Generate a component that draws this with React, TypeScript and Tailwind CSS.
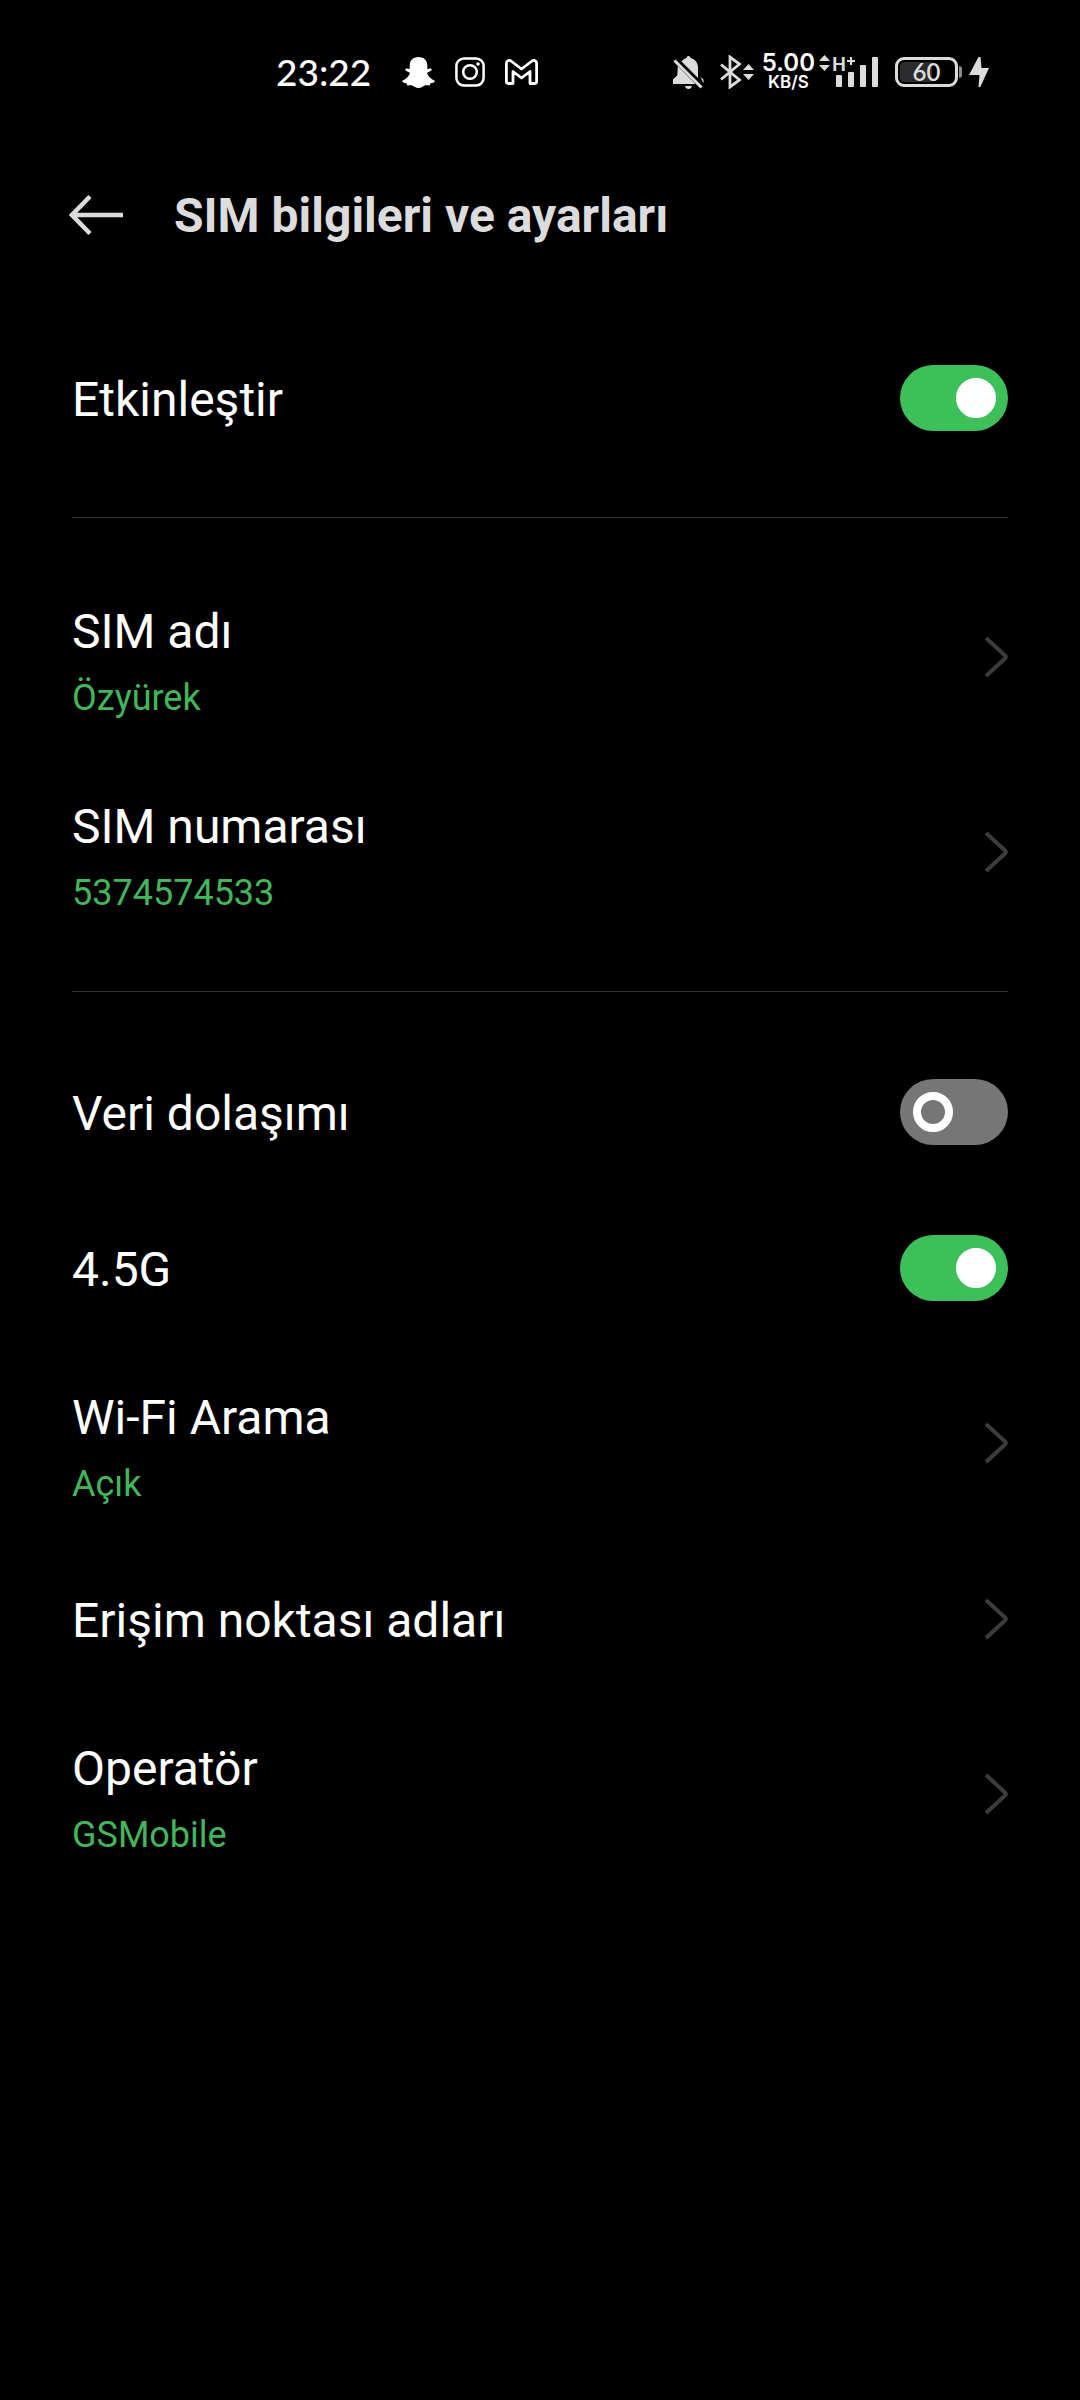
import { useState } from "react";

interface ToggleRowProps {
  label: string;
  defaultChecked?: boolean;
}

interface LinkRowProps {
  label: string;
  value?: string;
}

function ToggleRow({ label, defaultChecked = false }: ToggleRowProps) {
  const [checked, setChecked] = useState(defaultChecked);

  return (
    <label className="flex h-[156px] cursor-pointer items-center justify-between">
      <span className="pt-1 text-[48px] leading-[56px]">{label}</span>
      <span className="relative h-[66px] w-[108px] shrink-0">
        <input
          type="checkbox"
          role="switch"
          checked={checked}
          onChange={(e) => setChecked(e.target.checked)}
          className="peer block h-full w-full cursor-pointer appearance-none rounded-full bg-[#767676] checked:bg-[#3dc059]"
        />
        {/* Knob: hollow when off, solid when on */}
        <span className="pointer-events-none absolute top-[13px] left-[13px] size-10 rounded-full border-8 border-white peer-checked:left-[56px] peer-checked:bg-white" />
      </span>
    </label>
  );
}

function LinkRow({ label, value }: LinkRowProps) {
  return (
    <button
      type="button"
      className={`flex w-full cursor-pointer items-center justify-between text-left ${value ? "h-[195px] pb-px" : "h-[156px]"}`}
    >
      <span className={`flex flex-col gap-[17px] ${value ? "pt-2" : "pt-1"}`}>
        <span className="text-[48px] leading-[56px]">{label}</span>
        {value && <span className="text-[36px] leading-[42px] text-[#41b65c]">{value}</span>}
      </span>
      <svg className="h-[42px] w-6 shrink-0" viewBox="0 0 24 42" fill="none" stroke="#3b3b3b" strokeWidth="4">
        <path d="M2 2 21 19.5q1.5 1.5 0 3L2 40" />
      </svg>
    </button>
  );
}

function Divider() {
  return <hr className="mt-[41px] mb-[42px] h-px border-0 bg-[#333333]" />;
}

function DataArrows() {
  return (
    <svg className="h-4 w-[11px]" viewBox="0 0 11 16" fill="#dcdcdc">
      <path d="M5.5 0 11 6H0zM5.5 16 11 10H0z" />
    </svg>
  );
}

function StatusBar() {
  return (
    <div className="flex h-[144px] items-center pr-[91px] pl-[276px]">
      <span className="font-[Lato] text-[37px] leading-[44px] font-medium">23:22</span>
      <div className="ml-[31px] flex items-center gap-5">
        <svg className="h-[31px] w-[33px]" viewBox="0 0 33 31" fill="currentColor">
          <path d="M16.5 0C11 0 7.7 3.5 7.7 8.5V12c-1.2.2-2.7-.9-3.9-.3-1.3.9-.5 2.1 3.2 3.6.9.4 1 1 .6 1.8-1.4 2.9-3.6 5.3-6.8 6.300-1.600.9 0 2.100 3.700 2.900l.8 2.300c4.200-.9 5.200-.2 7.200 1.200 2.600 1.600 5.400 1.600 8 0 2-1.400 3-2.100 7.200-1.200l.8-2.300c3.700-.8 5.300-2 3.700-2.900-3.200-1-5.400-3.400-6.800-6.300-.4-.8-.3-1.400.6-1.800 3.700-1.500 4.500-2.700 3.200-3.600-1.200-.6-2.700.5-3.900.3V8.500C25.300 3.500 22 0 16.500 0z" />
        </svg>
        <svg className="size-[30px]" viewBox="0 0 30 30" fill="none" stroke="currentColor" strokeWidth="2.5">
          <rect x="1.4" y="1.4" width="27.2" height="27.2" rx="7.5" />
          <circle cx="15" cy="15" r="6.8" />
          <circle cx="23" cy="7" r="1.8" fill="currentColor" stroke="none" />
        </svg>
        <svg className="h-[26px] w-[33px]" viewBox="0 0 33 26" fill="none" stroke="currentColor" strokeWidth="2.8" strokeLinejoin="round">
          <path d="M1.4 4.4c0-2.6 2.6-3.8 4.6-2.4l10.5 8L27 2c2-1.4 4.6-.2 4.6 2.4v18.2c0 1.1-.7 1.9-1.8 1.9H25v-12L16.5 19 8 12.500v12H3.200c-1.100 0-1.800-.8-1.800-1.900z" />
        </svg>
      </div>

      <div className="ml-auto flex items-center text-[#dcdcdc]">
        <svg className="h-[34px] w-[31px]" viewBox="0 0 31 34" fill="currentColor">
          <path d="M8.5 6.500C10 4.500 11.800 3.300 13.500 2.900a2 2 0 0 1 4 0C22 4 25 7.500 25 12.500V23zM4.800 11 22.500 29H0v-4.500l4.300-4.300zM27.500 22l3 2.500v4zM12 31h7c-.5 1.900-1.700 3-3.500 3S12.500 32.900 12 31z" />
          <path d="m1.500 5.500 27 27" fill="none" stroke="currentColor" strokeWidth="3" />
        </svg>
        <svg className="ml-4 h-[34px] w-[22px]" viewBox="0 0 22 34" fill="none" stroke="currentColor" strokeWidth="2.8">
          <path d="m1 9.500 18.500 15.500L10 32V2l9.500 7L1 24.500" />
        </svg>
        <div className="ml-px">
          <DataArrows />
        </div>
        <div className="ml-2 flex flex-col items-center font-[Inter] text-white">
          <span className="text-[24px] leading-[20px] font-semibold">5.00</span>
          <span className="text-[17px] leading-[18px] font-semibold">KB/S</span>
        </div>
        <div className="mb-[19px] ml-1">
          <DataArrows />
        </div>
        <div className="relative ml-[5px] h-[30px] w-11">
          <span className="absolute -top-[2px] -left-[3px] font-[Lato] text-[18px] leading-[18px] font-black">H</span>
          <svg className="h-full w-full" viewBox="0 0 44 30" fill="currentColor">
            <path d="M12 3h3V0h2v3h3v2h-3v3h-2V5h-3z" />
            <rect x="1" y="18" width="6" height="12" rx="1" />
            <rect x="13" y="15" width="6" height="15" rx="1" />
            <rect x="25" y="8" width="6" height="22" rx="1" />
            <rect x="37" y="0" width="6" height="30" rx="1" />
          </svg>
        </div>
        <div className="ml-4 flex h-[30px] w-[63px] rounded-[9px] border-[3px] border-[#dcdcdc] p-[2px]">
          <div className="flex w-full items-center justify-center rounded-[4px] bg-linear-to-r from-[#2b2b2b] from-60% to-black to-60% font-[Lato] text-[24px] leading-[20px] font-semibold">
            60
          </div>
        </div>
        <span className="ml-px h-3 w-[3px] rounded-r-sm bg-[#8c8c8c]" />
        <svg className="ml-[7px] h-[30px] w-5" viewBox="0 0 20 30" fill="currentColor">
          <path d="M9.500 0 0 18h8.500l2 .2L9.500 30h1.800L20 11h-7.500L11.500 0z" />
        </svg>
      </div>
    </div>
  );
}

export default function App() {
  return (
    <div className="min-h-screen bg-black font-[Roboto,sans-serif] text-white">
      <StatusBar />
      <header className="flex h-[142px] items-center gap-[51px] pl-[69px] text-[#dcdcdc]">
        <button type="button" aria-label="Geri" className="cursor-pointer">
          <svg className="h-10 w-[54px]" viewBox="0 0 54 40" fill="none" stroke="currentColor" strokeWidth="4.500">
            <path d="M21 1.500 3 20l18 18.500M3 20h51" />
          </svg>
        </button>
        <h1 className="pt-0.5 text-[48px] leading-[56px] font-bold">SIM bilgileri ve ayarları</h1>
      </header>

      <main className="px-[72px] pt-[34px]">
        <ToggleRow label="Etkinleştir" defaultChecked />
        <Divider />
        <LinkRow label="SIM adı" value="Özyürek" />
        <LinkRow label="SIM numarası" value="5374574533" />
        <Divider />
        <ToggleRow label="Veri dolaşımı" />
        <ToggleRow label="4.5G" defaultChecked />
        <LinkRow label="Wi-Fi Arama" value="Açık" />
        <LinkRow label="Erişim noktası adları" />
        <LinkRow label="Operatör" value="GSMobile" />
      </main>
    </div>
  );
}
